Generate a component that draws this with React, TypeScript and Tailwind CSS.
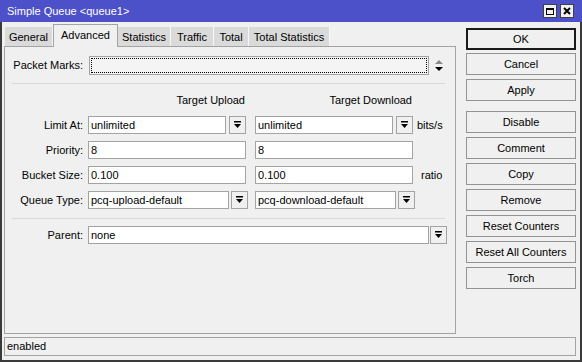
import React from "react";

const TABS = [
  { label: "General", w: "w-[48px]" },
  { label: "Advanced", w: "w-[65px]", active: true },
  { label: "Statistics", w: "w-[53px]" },
  { label: "Traffic", w: "w-[43px]" },
  { label: "Total", w: "w-[35px]" },
  { label: "Total Statistics", w: "w-[81px]" },
];

const BUTTONS = [
  ["OK", "Cancel", "Apply"],
  ["Disable", "Comment", "Copy", "Remove", "Reset Counters", "Reset All Counters", "Torch"],
];

const DownBtn = ({ className = "" }: { className?: string }) => (
  <div
    className={`w-[17px] h-[18px] shrink-0 border border-[#a3a3a3] bg-[#f0f0f0] flex items-center justify-center ${className}`}
  >
    <svg width="9" height="8" viewBox="0 0 9 8">
      <rect x="1" y="0" width="7" height="1.5" fill="#000" />
      <path d="M1 3h7L4.5 7z" fill="#000" />
    </svg>
  </div>
);

const Field = ({ value, w }: { value: string; w: string }) => (
  <div className={`${w} h-[18px] shrink-0 border border-[#a3a3a3] bg-white pl-[2px] flex items-center leading-none`}>
    {value}
  </div>
);

const Label = ({ text }: { text: string }) => (
  <div className="w-[76px] shrink-0 text-right pr-[5px]">{text}</div>
);

const App = () => {
  return (
    <div className="w-[582px] h-[362px] flex flex-col bg-[#4c50c9] font-['Liberation_Sans',Arial,sans-serif] text-[11px] text-black">
      {/* title bar */}
      <div className="h-[22px] shrink-0 flex items-center pl-[7px] pr-[8px] text-white text-[11px]">
        <span>Simple Queue &lt;queue1&gt;</span>
        <div className="ml-auto flex gap-[3px]">
          <div className="w-[14px] h-[14px] bg-[#f0f0f0] border border-[#404040] flex items-center justify-center">
            <div className="w-[8px] h-[7px] border border-black border-t-2" />
          </div>
          <div className="w-[14px] h-[14px] bg-[#f0f0f0] border border-[#404040] flex items-center justify-center">
            <svg width="8" height="8" viewBox="0 0 8 8">
              <path d="M1 1L7 7M7 1L1 7" stroke="#000" strokeWidth="2" />
            </svg>
          </div>
        </div>
      </div>

      {/* body */}
      <div className="flex-1 flex flex-col bg-[#f0f0f0] border-x-2 border-b-2 border-[#3a3a3a] pl-[2px] pr-[2px] pt-[2px] pb-[4px]">
        <div className="flex flex-1">
          {/* left: tabs + panel */}
          <div className="w-[452px] flex flex-col">
            <div className="h-[22px] flex items-end pl-px">
              {TABS.map((t) =>
                t.active ? (
                  <div
                    key={t.label}
                    className={`${t.w} h-[23px] relative -mb-px z-10 bg-[#f0f0f0] border-t border-x border-[#a3a3a3] flex items-start justify-center pt-[2px]`}
                  >
                    {t.label}
                  </div>
                ) : (
                  <div
                    key={t.label}
                    className={`${t.w} h-[19px] bg-[#dadada] border-r border-[#f7f7f7] flex items-center justify-center pt-px`}
                  >
                    {t.label}
                  </div>
                )
              )}
            </div>
            <div className="flex-1 border border-[#a3a3a3] pt-[9px] pl-[7px]">
              {/* packet marks */}
              <div className="flex items-center h-[19px]">
                <Label text="Packet Marks:" />
                <div className="ml-px w-[340px] h-[19px] border border-[#a3a3a3] bg-[#f4f4f4] p-px">
                  <div className="w-full h-full border border-dotted border-black" />
                </div>
                <svg className="ml-[5px]" width="10" height="14" viewBox="0 0 10 14">
                  <path d="M1 5h8L5 1z" fill="#8a8a8a" />
                  <path d="M1 8h8L5 12z" fill="#000" />
                </svg>
              </div>

              <div className="mt-[8px] w-[433px] h-px bg-[#d9d9d9]" />

              {/* headers */}
              <div className="flex mt-[10px] h-[13px] items-center">
                <div className="w-[233px] text-right">Target Upload</div>
                <div className="w-[167px] text-right">Target Download</div>
              </div>

              {/* limit at */}
              <div className="flex items-center h-[18px] mt-[9px]">
                <Label text="Limit At:" />
                <Field value="unlimited" w="w-[138px]" />
                <DownBtn className="ml-[3px]" />
                <Field value="unlimited" w="w-[138px] ml-[9px]" />
                <DownBtn className="ml-[3px]" />
                <span className="ml-[4px]">bits/s</span>
              </div>

              {/* priority */}
              <div className="flex items-center h-[18px] mt-[7px]">
                <Label text="Priority:" />
                <Field value="8" w="w-[158px]" />
                <Field value="8" w="w-[158px] ml-[9px]" />
              </div>

              {/* bucket size */}
              <div className="flex items-center h-[18px] mt-[7px]">
                <Label text="Bucket Size:" />
                <Field value="0.100" w="w-[158px]" />
                <Field value="0.100" w="w-[158px] ml-[9px]" />
                <span className="ml-[8px]">ratio</span>
              </div>

              {/* queue type */}
              <div className="flex items-center h-[18px] mt-[7px]">
                <Label text="Queue Type:" />
                <Field value="pcq-upload-default" w="w-[141px]" />
                <DownBtn className="ml-[2px]" />
                <Field value="pcq-download-default" w="w-[141px] ml-[7px]" />
                <DownBtn className="ml-[2px]" />
              </div>

              <div className="mt-[9px] w-[433px] h-px bg-[#d9d9d9]" />

              {/* parent */}
              <div className="flex items-center h-[18px] mt-[7px]">
                <Label text="Parent:" />
                <Field value="none" w="w-[341px]" />
                <DownBtn className="ml-px" />
              </div>
            </div>
          </div>

          {/* right: buttons */}
          <div className="ml-[10px] w-[110px] pt-[4px] flex flex-col gap-[10px]">
            {BUTTONS.map((group, gi) => (
              <div key={gi} className="flex flex-col gap-[4px]">
                {group.map((b) => (
                  <div
                    key={b}
                    className={`h-[22px] flex items-center justify-center bg-[#f0f0f0] ${
                      b === "OK" ? "border-2 border-[#1a1a1a] -mb-px" : "border border-[#939393]"
                    }`}
                  >
                    {b}
                  </div>
                ))}
              </div>
            ))}
          </div>
        </div>

        {/* status bar */}
        <div className="mt-[3px] h-[19px] shrink-0 border border-[#a3a3a3] flex items-center pl-[2px] mr-[2px]">
          enabled
        </div>
      </div>
    </div>
  );
};

export default App;
